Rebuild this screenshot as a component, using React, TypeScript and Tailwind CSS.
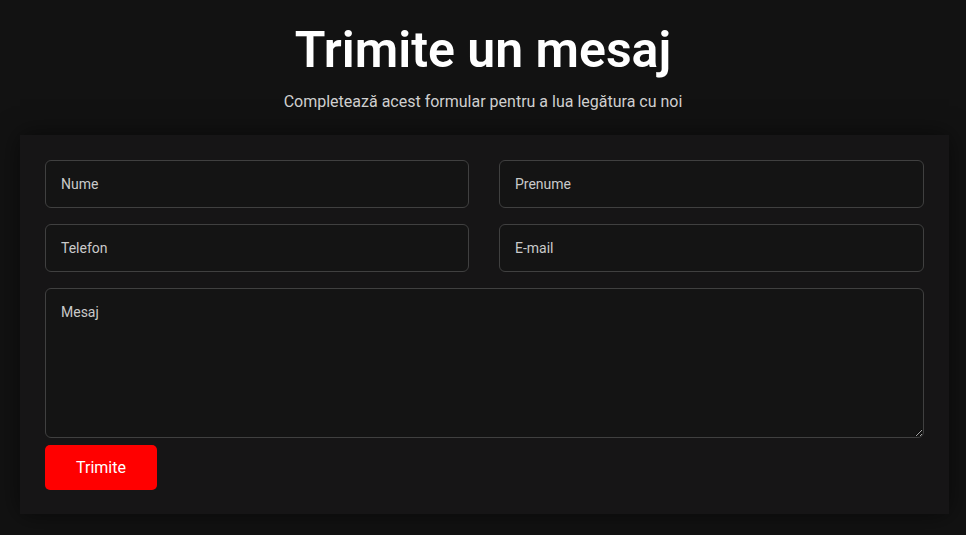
export default function App() {
  return (
    <div
      className="min-h-[535px] w-full bg-[#121212] px-[20px] pt-[20px] pb-[21px]"
      style={{ fontFamily: 'Roboto, "Liberation Sans", sans-serif' }}
    >
      <h1 className="text-center text-[50px] leading-[60px] font-semibold text-white">
        Trimite un mesaj
      </h1>
      <p className="mt-[10px] text-center text-[16px] leading-[24px] text-[#cfcfcf]">
        Completează acest formular pentru a lua legătura cu noi
      </p>
      <form
        className="mt-[21px] w-[929px] bg-[#161516] px-[25px] pt-[25px] pb-[24px] shadow-[0_0_24px_rgba(0,0,0,0.55)]"
        onSubmit={(e) => e.preventDefault()}
      >
        <div className="grid grid-cols-[424px_1fr] gap-x-[30px] gap-y-[16px]">
          <input
            placeholder="Nume"
            className="h-[48px] rounded-[6px] border border-[#404040] bg-[#141414] px-[15px] pb-[1px] text-[14px] text-white placeholder:text-[#cacaca] outline-none"
          />
          <input
            placeholder="Prenume"
            className="h-[48px] rounded-[6px] border border-[#404040] bg-[#141414] px-[15px] pb-[1px] text-[14px] text-white placeholder:text-[#cacaca] outline-none"
          />
          <input
            placeholder="Telefon"
            className="h-[48px] rounded-[6px] border border-[#404040] bg-[#141414] px-[15px] pb-[1px] text-[14px] text-white placeholder:text-[#cacaca] outline-none"
          />
          <input
            placeholder="E-mail"
            className="h-[48px] rounded-[6px] border border-[#404040] bg-[#141414] px-[15px] pb-[1px] text-[14px] text-white placeholder:text-[#cacaca] outline-none"
          />
          <textarea
            placeholder="Mesaj"
            className="col-span-2 block h-[150px] rounded-[6px] border border-[#404040] bg-[#141414] px-[15px] py-[13px] text-[14px] leading-[20px] text-white placeholder:text-[#cacaca] outline-none"
          />
        </div>
        <button
          type="submit"
          className="mt-[7px] block h-[45px] w-[112px] rounded-[5px] bg-[#ff0000] text-[16px] font-normal text-white"
        >
          Trimite
        </button>
      </form>
    </div>
  );
}
